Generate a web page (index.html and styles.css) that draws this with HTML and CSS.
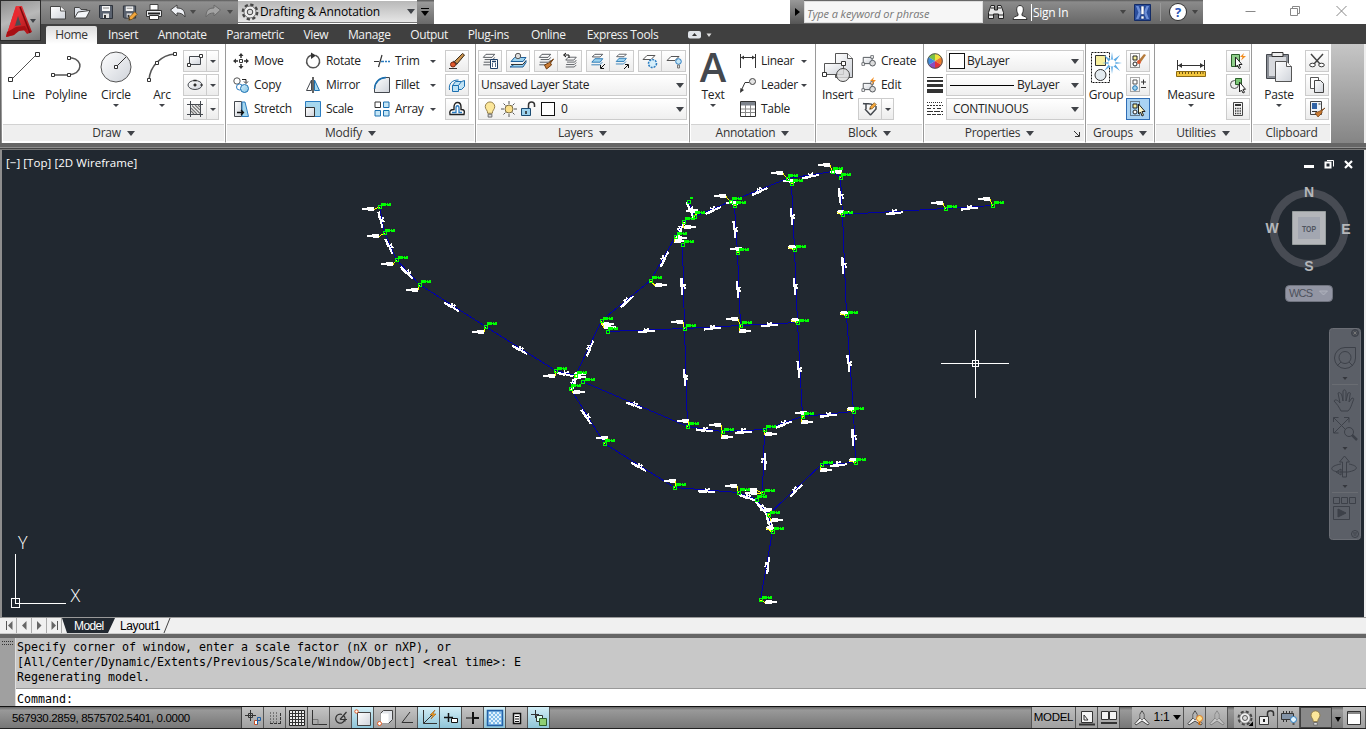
FILE: index.html
```html
<!DOCTYPE html>
<html lang="en">
<head>
<meta charset="utf-8">
<title>Drafting &amp; Annotation</title>
<link rel="stylesheet" href="styles.css">
</head>
<body>
<svg class="defs" width="0" height="0">
  <defs>
    <linearGradient id="paper" x1="0" y1="0" x2="1" y2="1"><stop offset="0" stop-color="#fff"/><stop offset="1" stop-color="#cfd3da"/></linearGradient>
    <linearGradient id="red" x1="0" y1="0" x2="1" y2="1"><stop offset="0" stop-color="#f7454a"/><stop offset="1" stop-color="#a80d12"/></linearGradient>
    <linearGradient id="blue" x1="0" y1="0" x2="1" y2="1"><stop offset="0" stop-color="#d6effb"/><stop offset="1" stop-color="#7fc3e6"/></linearGradient>
    <symbol id="layers" viewBox="0 0 16 16"><path d="M4.500 1.500h10l-3 3.500H1.500zM3 7.500h9.500l2-2.500M2 10.500h10l2.500-2.500M1.500 13.500h10.500l2.500-2.500" fill="none" stroke="#44484e"/></symbol>
    <symbol id="layersblue" viewBox="0 0 16 16"><path d="M5 6.500h9l-3 4H1.500z" fill="#9cd2ee" stroke="#1c70b0"/><path d="M5 1.500h9l-3 3H2z" fill="#fff" stroke="#44484e"/><path d="M1 13.500h9.500l3-3" fill="none" stroke="#1c70b0"/></symbol>
    <symbol id="bulb" viewBox="0 0 12 18"><path d="M6 1a5 5 0 0 0-5 5c0 3 2.500 3.500 2.500 7h5c0-3.500 2.500-4 2.500-7a5 5 0 0 0-5-5z" fill="#fce79a" stroke="#8f7a45"/><path d="M4 14h4v3H4z" fill="#ddd" stroke="#666"/></symbol>
    <symbol id="compass" viewBox="0 0 16 16"><path d="M8 .8L6 4v4L1 13.500l1 1.500 6-4 6 4 1-1.500L10 8V4z" fill="#f4f4f4" stroke="#444"/><path d="M8 2v7M6 8l2 2 2-2" fill="none" stroke="#777"/></symbol>
    <symbol id="gear" viewBox="0 0 18 18"><circle cx="9" cy="9" r="6.800" fill="none" stroke="#444" stroke-width="3.200" stroke-dasharray="3.100 2.240"/><circle cx="9" cy="9" r="6" fill="#eee" stroke="#777"/><circle cx="9" cy="9" r="2.800" fill="#ddd" stroke="#444"/></symbol>
    <symbol id="floppy" viewBox="0 0 16 16"><path d="M1.500 1.500h13v13h-12l-1-1z" fill="#59616e" stroke="#2e333b"/><path d="M4 2h8v5H4z" fill="#f5f5f5"/><path d="M5 9.500h6V14H5z" fill="#e4e4e4"/><path d="M6 11h2v3H6z" fill="#333"/><path d="M5 4h6" stroke="#888"/></symbol>
    <symbol id="shapes" viewBox="0 0 18 14"><path d="M2.500 3.500h10v7h-10z" fill="url(#paper)" stroke="#44484e"/><path d="M1 9.500h3v3H1zM11 1.500h3v3h-3z" fill="#fff" stroke="#44484e" stroke-width=".8"/><circle cx="13" cy="10" r="3.200" fill="#ddd" stroke="#44484e"/></symbol>
    <symbol id="pencil" viewBox="0 0 12 12"><path d="M1 11l1-4 6-6 3 3-6 6z" fill="#f3a63c" stroke="#70501c"/><path d="M1 11l1-2 1 1z" fill="#222"/></symbol>
  </defs>
</svg>

<header class="titlebar">
  <div class="quick">
    <svg class="qi" viewBox="0 0 18 18"><path d="M1.500 3.500h10l5 4.500v8h-15z" fill="url(#paper)" stroke="#444"/><path d="M11.500 3.500V8h5" fill="#fff" stroke="#555"/></svg>
    <svg class="qi" viewBox="0 0 18 18"><path d="M1.500 15V4.500h5l1.500 2h6V9" fill="#dfe3ea" stroke="#444"/><path d="M1.500 15L5 9l12-1.500L13 15z" fill="#f5f7fa" stroke="#444"/></svg>
    <svg class="qi" viewBox="0 0 18 18"><use href="#floppy" x="1" y="1" width="16" height="16"/></svg>
    <svg class="qi" viewBox="0 0 18 18"><use href="#floppy" x="1" y="1" width="15" height="16"/><use href="#pencil" x="7" y="8" width="10" height="10"/></svg>
    <svg class="qi" viewBox="0 0 18 18"><path d="M5 1.500h8V7H5z" fill="#fff" stroke="#444"/><path d="M1.500 7.500h15v6h-15z" fill="#eef0f3" stroke="#333"/><path d="M3 10.500h12" stroke="#222" stroke-width="2"/><path d="M4.500 12.500h9v4h-9z" fill="#fff" stroke="#333"/></svg>
    <svg class="qi" viewBox="0 0 18 18"><path d="M1.500 7L8 2v3c6 0 8 3 8 9-2-3-4-4-8-4v3z" fill="#eef0f5" stroke="#444"/></svg>
    <i class="tri qt"></i>
    <svg class="qi redo" viewBox="0 0 18 18"><path d="M16.500 7L10 2v3C4 5 2 8 2 14c2-3 4-4 8-4v3z" fill="#a3a3a3" stroke="#6a6a6a"/></svg>
    <i class="tri qt"></i>
  </div>
  <div class="workspace"><svg width="18" height="18"><use href="#gear"/></svg><span>Drafting &amp; Annotation</span><i class="tri"></i></div>
  <div class="customize"><i class="bar"></i><i class="tri black"></i></div>
  <div class="infocenter">
    <div class="play"><svg width="5" height="8"><path d="M0 0l5 4-5 4z"/></svg></div>
    <div class="search">Type a keyword or phrase</div>
    <svg class="binoc" width="18" height="16" viewBox="0 0 18 16"><path d="M4 1.500h3.500V6h3V1.500H14l2.500 7v6h-5V10h-5v4.500h-5v-6z" fill="#e8e8e8" stroke="#222"/><path d="M2 11h4M12 11h4M4 4h3M11 4h3" stroke="#222"/></svg>
    <svg class="user" width="16" height="17" viewBox="0 0 16 17"><path d="M1 15.500c0-3 3-3 5-4V10C4 7 4 1.500 8 1.500S12 7 10 10v1.500c2 1 5 1 5 4z" fill="#fff" stroke="#333"/></svg>
    <span class="signin">Sign In</span><i class="tri st"></i>
    <svg class="exch" width="17" height="17" viewBox="0 0 17 17"><path d="M.5.500h16v16H.5z" fill="#2c4f9e" stroke="#132b66"/><path d="M2 2h2.500l3 6.500-3 6.500H2l2.500-6.500zM15 2h-2.500l-3 6.500 3 6.500H15l-2.500-6.500z" fill="#6d8fd6"/><path d="M7 2h3v8.500H7zM7 12h3v3H7z" fill="#fff" stroke="#1b3575" stroke-width=".6"/></svg>
    <i class="vsep"></i>
    <div class="help">?</div><i class="tri st"></i>
  </div>
  <svg class="wctl" width="104" height="12" viewBox="0 0 104 12"><path d="M.5 6.500h10M45.500 3.500h7v7h-7zM47.500 3.500v-2h7v7h-2M91.500 1l10 10M101.500 1l-10 10" fill="none" stroke="#888"/></svg>
</header>

<nav class="tabs">
  <span class="tab on">Home</span><span class="tab">Insert</span><span class="tab">Annotate</span><span class="tab">Parametric</span><span class="tab">View</span><span class="tab">Manage</span><span class="tab">Output</span><span class="tab wide">Plug-ins</span><span class="tab">Online</span><span class="tab">Express Tools</span>
  <svg class="mini" width="24" height="8" viewBox="0 0 24 8"><rect width="13" height="7.500" rx="2" fill="#dfe3e8"/><path d="M4 5l2.500-3L9 5z" fill="#333"/><path d="M18.500 2.500h5L21 6z" fill="#ddd"/></svg>
</nav>
<div class="appbtn"><svg width="30" height="34" viewBox="0 0 30 34"><path d="M12 2h6l10 26-5 2-4-5-7 1-2 5-8 2L10 8z" fill="url(#red)"/><path d="M12 2l3 8-9 22-4 1L10 8z" fill="#e8292f"/><path d="M14 12l3 9-6 1z" fill="#4d4d50"/><path d="M16 3l10 26" stroke="#7d0a0d" stroke-width="1.500"/><path d="M3 28l9-5 9-1 2 4-8 1-5 4-8 2z" fill="#a81014"/></svg><i class="tri"></i></div>

<main class="ribbon">
  <section class="panel draw">
    <div class="body">
      <div class="big w44"><svg viewBox="0 0 34 34"><path d="M4 30L30 4" stroke="#555"/><path d="M1.500 27.500h4v4h-4zM28.500 2.500h4v4h-4z" fill="#fff" stroke="#333"/></svg><b>Line</b></div>
      <div class="big w42"><svg viewBox="0 0 34 34"><path d="M4 25h16M20 8h3c11 2 11 15-3 17" fill="none" stroke="#555" stroke-width="1.500"/><path d="M2.500 23.500h3v3h-3zM18.500 23.500h3v3h-3zM18.500 6.500h3v3h-3z" fill="#fff" stroke="#333"/></svg><b>Polyline</b></div>
      <div class="big w58"><svg viewBox="0 0 34 34"><circle cx="17" cy="17" r="15" fill="url(#paper)" stroke="#555"/><path d="M17 17L27 7" stroke="#333"/><path d="M15.500 15.500h3v3h-3z" fill="#fff" stroke="#333"/></svg><b>Circle</b><i class="tri s"></i></div>
      <div class="big w34"><svg viewBox="0 0 34 34"><path d="M4 30C5 16 16 5 30 4" fill="none" stroke="#555" stroke-width="1.500"/><path d="M2.500 28.500h3v3h-3zM28.500 2.500h3v3h-3zM10.500 11.500h3v3h-3z" fill="#fff" stroke="#333"/></svg><b>Arc</b><i class="tri s"></i></div>
      <div class="stack splits">
        <div class="split"><span class="sb"><svg viewBox="0 0 16 16"><path d="M2.500 3.500h11v8h-11z" fill="url(#paper)" stroke="#44484e"/><path d="M.5 10.500h3v3h-3zM12.500 1.500h3v3h-3z" fill="#fff" stroke="#333"/></svg></span><span class="sa"><i class="tri s"></i></span></div>
        <div class="split"><span class="sb"><svg viewBox="0 0 16 16"><ellipse cx="8" cy="8" rx="7" ry="4.500" fill="url(#paper)" stroke="#44484e"/><path d="M6.500 8h3M8 6.500v3M6.500 3.500h3M13.500 8h2" stroke="#222" stroke-width="1.500"/></svg></span><span class="sa"><i class="tri s"></i></span></div>
        <div class="split"><span class="sb"><svg viewBox="0 0 16 16"><path d="M0 3.500h16M0 13.500h16M3.500 0v16M13.500 0v16" stroke="#44484e"/><path d="M4 10l3 3M4 7l6 6M5 4.500l8 8M8 4l5 5M11 4l2 2" stroke="#777" stroke-width="1.200"/></svg></span><span class="sa"><i class="tri s"></i></span></div>
      </div>
    </div>
    <footer>Draw<i class="tri"></i></footer>
  </section>

  <section class="panel modify">
    <div class="body">
      <div class="stack c72">
        <div class="cmd"><svg viewBox="0 0 16 16"><path d="M8 1v4M8 11v4M1 8h4M11 8h4" stroke="#333" stroke-width="1.500"/><path d="M8 0l2.500 3h-5zM8 16l2.500-3h-5zM0 8l3-2.500v5zM16 8l-3-2.500v5z" fill="#333"/><path d="M6.500 6.500h3v3h-3z" fill="#fff" stroke="#333"/></svg>Move</div>
        <div class="cmd"><svg viewBox="0 0 16 16"><circle cx="4" cy="4" r="3.200" fill="#fff" stroke="#555"/><circle cx="6.500" cy="10" r="3" fill="#fff" stroke="#2b7cc0"/><circle cx="11.500" cy="11.500" r="4" fill="url(#blue)" stroke="#1c70b0"/><path d="M9 2.500h4v3M11 4.500l2 2 2-2" fill="none" stroke="#222"/></svg>Copy</div>
        <div class="cmd"><svg viewBox="0 0 16 16"><path d="M1.500.500h7v15h-7z" fill="url(#paper)" stroke="#44484e"/><path d="M9 1h3l3.500 14.500H9z" fill="#a6d7ee" stroke="#2b7cc0"/><path d="M4 11.500h6M8 9l2.500 2.500L8 14" fill="none" stroke="#111" stroke-width="1.300"/></svg>Stretch</div>
      </div>
      <div class="stack c69">
        <div class="cmd"><svg viewBox="0 0 16 16"><path d="M6 2.200A6.500 6.500 0 1 0 10.500 2.300" fill="none" stroke="#555" stroke-width="1.500"/><path d="M6-.5L11 2.500 6 6z" fill="#333"/></svg>Rotate</div>
        <div class="cmd"><svg viewBox="0 0 16 16"><path d="M1.500 13.500L6.500 3v10.500z" fill="#fff" stroke="#44484e"/><path d="M14.500 13.500L9.500 3v10.500z" fill="#a6d7ee" stroke="#1c70b0"/><path d="M8 0v16" stroke="#111" stroke-width="1.300"/></svg>Mirror</div>
        <div class="cmd"><svg viewBox="0 0 16 16"><path d="M.5.500h15v15H.5z" fill="#a6d7ee" stroke="#2b7cc0"/><path d="M.5 6.500h9v9h-9z" fill="url(#paper)" stroke="#333"/></svg>Scale</div>
      </div>
      <div class="stack c72 arrows">
        <div class="cmd"><svg viewBox="0 0 16 16"><path d="M0 8.500h5M8 2L4.500 14" stroke="#333" stroke-width="1.200"/><path d="M7 8.500h3M11 8.500h2M14 8.500h2" stroke="#2b7cc0" stroke-width="1.300"/></svg>Trim<i class="tri s"></i></div>
        <div class="cmd"><svg viewBox="0 0 16 16"><path d="M.5 15.500V12C1 5 5 1 12 .5h3.500v15z" fill="url(#paper)" stroke="#44484e"/><path d="M.5 12C1 5 5 1 12 .5" fill="none" stroke="#1c70b0" stroke-width="1.500"/></svg>Fillet<i class="tri s"></i></div>
        <div class="cmd"><svg viewBox="0 0 16 16"><path d="M1 1h5.500v5.500H1z" fill="#fff" stroke="#333"/><path d="M9.500 1H15v5.500H9.500zM1 9.500h5.500V15H1zM9.500 9.500H15V15H9.500z" fill="#c5e6f6" stroke="#1c70b0"/></svg>Array<i class="tri s"></i></div>
      </div>
      <div class="stack btns">
        <span class="sb"><svg viewBox="0 0 16 16"><path d="M5 9l8.500-8.500 2 1.500L8 11z" fill="#c9924e" stroke="#3c2c18"/><path d="M5 7.500l3.500 3.500-1.500 1.500L3.500 9z" fill="#444"/><circle cx="4" cy="11.500" r="2.500" fill="#e0592e" stroke="#7b2a10"/><path d="M0 15.500h8" stroke="#333"/></svg></span>
        <span class="sb"><svg viewBox="0 0 16 16"><path d="M3.500 8.500h6v6h-6zM3.500 8.500l3-4h6l-3 4M12.500 4.500l3-1v6l-3 3h-3" fill="#bfe2f5" stroke="#1c70b0"/><path d="M.5 13c-1-6 2-10 9-10" fill="none" stroke="#1c70b0"/></svg></span>
        <span class="sb"><svg viewBox="0 0 16 16"><path d="M1 13.500c-1-4 1-5 4-5V6c0-6 7-6 7 0v2.500c3 0 4 1 3 5z" fill="#fff" stroke="#222" stroke-width="1.400"/><path d="M3 11.500h4V7c0-3 3-3 3 0v4.500h3" fill="none" stroke="#2b7cc0" stroke-width="1.300"/></svg></span>
      </div>
    </div>
    <footer>Modify<i class="tri"></i></footer>
  </section>

  <section class="panel layer">
    <div class="body col">
      <div class="lrow">
        <span class="sb"><svg viewBox="0 0 16 16"><use href="#layers" width="14" height="14"/><path d="M8.500 6.500h7v9h-7z" fill="#fff" stroke="#1f3e66"/><path d="M10 8.500h4M10 11h1M13 11h1M10 13h1M13 13h1" stroke="#1f3e66" stroke-width="1.500"/></svg></span>
        <span class="sb"><svg viewBox="0 0 16 16"><path d="M4 11.500h9l3-4v2l-3 4.500H0zM4.500 4.500H16l-3 4H1z" fill="#9cd2ee" stroke="#1c5f9b"/><path d="M1 11.500h11.500l3-3" fill="none" stroke="#333"/><circle cx="8" cy="3" r="2.700" fill="#ddd" stroke="#555"/></svg></span>
        <span class="pair"><span class="sb"><svg viewBox="0 0 16 16"><use href="#layers" width="14" height="14"/><path d="M15.500 6l-3 4 1 2-5 4-2-4 4-2z" fill="#c97a33" stroke="#6e3c10"/></svg></span><span class="sb"><svg viewBox="0 0 16 16"><use href="#layers" x="2" y="3" width="14" height="13"/><path d="M7 5V2H2M4 0L1.500 2 4 4" fill="none" stroke="#111"/></svg></span></span>
        <span class="pair"><span class="sb"><svg viewBox="0 0 16 16"><use href="#layersblue" width="15" height="14"/><path d="M15 11l-4 4M10.500 12v3.500H14" fill="none" stroke="#111"/></svg></span><span class="sb"><svg viewBox="0 0 16 16"><use href="#layersblue" width="15" height="13"/><path d="M10 16l4-4M11 11.500h3.500V15" fill="none" stroke="#111"/></svg></span></span>
        <span class="pair"><span class="sb"><svg viewBox="0 0 16 16"><path d="M5 2.500h8l-4 4H1z" fill="#fff" stroke="#555"/><circle cx="10.500" cy="10.500" r="4" fill="#d6effb" stroke="#2b7cc0" stroke-width="1.500" stroke-dasharray="2 1"/></svg></span><span class="sb"><svg viewBox="0 0 16 16"><path d="M5 3.500h8l-4 4H1z" fill="#fff" stroke="#555"/><circle cx="12.500" cy="8.500" r="2.800" fill="#c5e6f6" stroke="#2b7cc0"/><path d="M11.500 12h2v3h-2z" fill="#ddd" stroke="#777"/></svg></span></span>
      </div>
      <div class="combo"><span>Unsaved Layer State</span><i class="tri"></i></div>
      <div class="combo icons"><svg width="12" height="17"><use href="#bulb"/></svg><svg width="16" height="16" viewBox="0 0 16 16"><circle cx="8" cy="8" r="4" fill="#fbe08a" stroke="#7a6c45"/><path d="M8 0v3M8 13v3M0 8h3M13 8h3M2.500 2.500l2 2M11.500 11.500l2 2M13.500 2.500l-2 2M4.500 11.500l-2 2" stroke="#555"/></svg><svg width="16" height="16" viewBox="0 0 16 16"><path d="M1.500 7.500h9v7h-9z" fill="#9cd2ee" stroke="#1b4b72"/><path d="M8.500 7V4c0-4 6-4 6 0v2" fill="none" stroke="#333" stroke-width="1.500"/><path d="M6 10v3" stroke="#222" stroke-width="1.500"/></svg><i class="swatch"></i><span>0</span><i class="tri"></i></div>
    </div>
    <footer>Layers<i class="tri"></i></footer>
  </section>

  <section class="panel anno">
    <div class="body">
      <div class="big w44"><strong class="glyph">A</strong><b>Text</b><i class="tri s"></i></div>
      <div class="stack c72 arrows">
        <div class="cmd"><svg viewBox="0 0 16 16"><path d="M.5 1v14M15.500 1v14M1 4.500h14" stroke="#333"/><path d="M1 4.500l3-2v4zM15 4.500l-3-2v4z" fill="#333"/></svg>Linear<i class="tri s"></i></div>
        <div class="cmd"><svg viewBox="0 0 16 16"><path d="M1 14L5 5.500h4" fill="none" stroke="#333"/><path d="M0 16l.5-5L4 13z" fill="#333"/><circle cx="12.500" cy="4.500" r="3" fill="#e4e4e4" stroke="#444"/></svg>Leader<i class="tri s"></i></div>
        <div class="cmd"><svg viewBox="0 0 16 16"><path d="M.5.500h15v15H.5z" fill="#fff" stroke="#333"/><path d="M1 1h14v3.500H1z" fill="#7d838c"/><path d="M5.500 4v11M10.500 4v11M1 8h14M1 11.500h14" stroke="#888"/></svg>Table</div>
      </div>
    </div>
    <footer>Annotation<i class="tri"></i></footer>
  </section>

  <section class="panel block">
    <div class="body">
      <div class="big w42"><svg viewBox="0 0 34 34"><path d="M14.500 3.500h12l5 5v19h-17z" fill="url(#paper)" stroke="#555"/><path d="M26.500 3.500v5h5" fill="#fff" stroke="#555"/><path d="M3.500 13.500h19v11h-19z" fill="url(#paper)" stroke="#555"/><path d="M1.500 22.500h4v4h-4zM20.500 11.500h4v4h-4z" fill="#fff" stroke="#333"/><circle cx="22" cy="25" r="6.500" fill="#ddd" fill-opacity=".8" stroke="#444"/></svg><b>Insert</b></div>
      <div class="stack">
        <div class="cmd"><svg viewBox="0 0 16 16"><use href="#shapes" width="16" height="15"/></svg>Create</div>
        <div class="cmd"><svg viewBox="0 0 16 16"><use href="#shapes" y="3" width="16" height="13"/><path d="M13 0l-4 4h3l-2 4 5-5h-3z" fill="#f28c1e"/></svg>Edit</div>
        <div class="split"><span class="sb"><svg viewBox="0 0 16 16"><path d="M1 2.500c3 1 8-1 10 1.500M4 3v5M8.500 14L3 8M8.500 14L14 8V5" fill="none" stroke="#44484e" stroke-width="1.500"/><use href="#pencil" x="7" y="1" width="8" height="8"/></svg></span><span class="sa"><i class="tri s"></i></span></div>
      </div>
    </div>
    <footer>Block<i class="tri"></i></footer>
  </section>

  <section class="panel props">
    <div class="body">
      <div class="stack pic">
        <svg viewBox="0 0 16 16"><circle cx="8" cy="8" r="7.500" fill="#eee"/><path d="M8 8V.5A7.500 7.500 0 0 1 14.500 4z" fill="#f3e23c"/><path d="M8 8V.5A7.500 7.500 0 0 0 1.500 4z" fill="#7cc242"/><path d="M8 8l6.500-4a7.500 7.500 0 0 1 0 8z" fill="#ee7d2b"/><path d="M8 8l6.500 4A7.500 7.500 0 0 1 8 15.500z" fill="#e2323a"/><path d="M8 8v7.500A7.500 7.500 0 0 1 1.500 12z" fill="#8a4bc0"/><path d="M8 8l-6.500 4a7.500 7.500 0 0 1 0-8z" fill="#3c8de0"/><circle cx="8" cy="8" r="7.300" fill="none" stroke="#555"/></svg>
        <svg viewBox="0 0 16 16"><path d="M0 .5h16" stroke="#333"/><path d="M0 4h16" stroke="#333" stroke-width="2"/><path d="M0 8.500h16" stroke="#333" stroke-width="3"/><path d="M0 14h16" stroke="#333" stroke-width="4"/></svg>
        <svg viewBox="0 0 16 16"><path d="M0 1.500h16" stroke="#333" stroke-dasharray="1 1"/><path d="M0 4.500h16" stroke="#333" stroke-dasharray="2 1"/><path d="M0 7.500h16" stroke="#333" stroke-dasharray="4 2 2 2"/><path d="M0 10.500h16" stroke="#333" stroke-dasharray="6 1"/><path d="M0 13.500h16" stroke="#333" stroke-dasharray="4 1"/></svg>
      </div>
      <div class="stack combos">
        <div class="combo"><i class="swatch"></i><span>ByLayer</span><i class="tri"></i></div>
        <div class="combo"><i class="rule"></i><span>ByLayer</span><i class="tri"></i></div>
        <div class="combo"><span class="cont">CONTINUOUS</span><i class="tri"></i></div>
      </div>
    </div>
    <footer class="off">Properties<i class="tri"></i><svg class="launch" width="6" height="6"><path d="M0 0l5 5M5.500 1v4.500H1" fill="none" stroke="#333"/></svg></footer>
  </section>

  <section class="panel groups">
    <div class="body">
      <div class="big w40"><svg viewBox="0 0 34 34"><path d="M2.500 2.500h18v30h-18z" fill="none" stroke="#111" stroke-dasharray="2 1"/><path d="M6.500 5.500h10v10h-10z" fill="#f7ef9e" stroke="#333"/><circle cx="11.500" cy="25" r="5.500" fill="#e4ebf0" stroke="#333"/><path d="M23 2l1 8 7-5-5 7 7 1-7 1 5 7-7-5-1 8-1-8-7 5 5-7-7-1 7-1-5-7 7 5z" fill="#5aa9e4"/><circle cx="23" cy="13" r="3.500" fill="#fff"/></svg><b>Group</b></div>
      <div class="stack btns">
        <span class="sb"><svg viewBox="0 0 16 16"><path d="M.5.500h9v14h-9z" fill="none" stroke="#333" stroke-dasharray="1 1"/><path d="M3 3h4v4H3z" fill="#f7ef9e" stroke="#222"/><circle cx="5" cy="11" r="2" fill="#fff" stroke="#222"/><path d="M9 7l5-6 2 1-5 7z" fill="#b57a3a"/><circle cx="9" cy="9" r="2" fill="#d9562e"/></svg></span>
        <span class="sb"><svg viewBox="0 0 16 16"><path d="M.5.500h9v14h-9z" fill="none" stroke="#555" stroke-dasharray="1 1"/><path d="M3 3h4v4H3z" fill="#fff" stroke="#555"/><circle cx="5" cy="11" r="2.300" fill="#9cd2ee" stroke="#1c70b0"/><path d="M11 5h5M13.500 2.500v5M11 10.500h5" stroke="#333"/></svg></span>
        <span class="sb on"><svg viewBox="0 0 16 16"><path d="M.5.500h9v14h-9z" fill="none" stroke="#222" stroke-dasharray="1 1"/><path d="M3 3h4v4H3z" fill="#f7ef9e" stroke="#222"/><circle cx="5" cy="11" r="2" fill="#fff" stroke="#222"/><path d="M8.500 3v10l2-2 1.500 4 1.500-.7L12 10.500h3z" fill="#fff8c8" stroke="#222"/></svg></span>
      </div>
    </div>
    <footer>Groups<i class="tri"></i></footer>
  </section>

  <section class="panel utils">
    <div class="body">
      <div class="big w70"><svg viewBox="0 0 34 34"><path d="M3 15.500h28M3.500 10v10M30.500 10v10" stroke="#333"/><path d="M4 15.500l4-2.500v5zM30 15.500l-4-2.500v5z" fill="#333"/><path d="M2.500 21.500h29v5h-29z" fill="#f2c53d" stroke="#8b6a14"/><path d="M5.500 22v2M8.500 22v2M11.500 22v2M14.500 22v2M17.500 22v2M20.500 22v2M23.500 22v2M26.500 22v2M29 22v2" stroke="#6e5210"/></svg><b>Measure</b><i class="tri s"></i></div>
      <div class="stack btns">
        <span class="sb"><svg viewBox="0 0 16 16"><path d="M1.500 1.500h8v12h-8z" fill="#8fd08a" stroke="#2b5f2a"/><path d="M5.500 4v10l2-2 1.500 3.500 1.500-.7L9 11.500h3z" fill="#fff" stroke="#222"/><path d="M14 0l-4 4h2.500L11 7.500 16 3h-3z" fill="#f28c1e"/></svg></span>
        <span class="sb"><svg viewBox="0 0 16 16"><circle cx="4.500" cy="7.500" r="4" fill="#eee" stroke="#555"/><path d="M5.500 1.500h6v6h-6z" fill="#7cc676" stroke="#2b5f2a"/><path d="M9.500 5v10l2-2 1.500 3 1.500-.7-1.500-3h2.500z" fill="#fff" stroke="#222"/></svg></span>
        <span class="sb"><svg viewBox="0 0 16 16"><path d="M3.500 1.500h9v13h-9z" fill="#f4f4f4" stroke="#444"/><path d="M5 4h6" stroke="#333" stroke-width="2"/><path d="M5 7.500h6M5 10h6M5 12.500h6" stroke="#333" stroke-width="1.500" stroke-dasharray="1.300 1"/></svg></span>
      </div>
    </div>
    <footer>Utilities<i class="tri"></i></footer>
  </section>

  <section class="panel clip">
    <div class="body">
      <div class="big w52"><svg viewBox="0 0 34 34"><path d="M4.500 4.500h22v24h-22z" fill="#8b8f96" stroke="#44484e"/><path d="M7 7h17v19H7z" fill="#d8dade"/><path d="M10 2.500h11v4H10z" fill="#eee" stroke="#333"/><path d="M13.500 11.500h11l5 5v15h-16z" fill="url(#paper)" stroke="#555"/><path d="M24.500 11.500v5h5" fill="#fff" stroke="#555"/></svg><b>Paste</b><i class="tri s"></i></div>
      <div class="stack btns">
        <span class="sb"><svg viewBox="0 0 16 16"><path d="M2 1l9 10M14 1L5 11" stroke="#444" stroke-width="1.500"/><ellipse cx="3.500" cy="12" rx="2.800" ry="1.800" fill="#fff" stroke="#333"/><ellipse cx="12.500" cy="12" rx="2.800" ry="1.800" fill="#fff" stroke="#333"/></svg></span>
        <span class="sb"><svg viewBox="0 0 16 16"><path d="M1.500.500h8v11h-8z" fill="#fff" stroke="#555"/><path d="M5.500 3.500h6l3 3v9h-9z" fill="url(#paper)" stroke="#444"/></svg></span>
        <span class="sb"><svg viewBox="0 0 16 16"><path d="M1.500.500h11v13h-11z" fill="#eef2f7" stroke="#444"/><path d="M3 2h5v6H3z" fill="#2f62a5"/><path d="M3 10.500h5M9.500 3h2" stroke="#333"/><path d="M16 7l-3 3v2l-4 4-3-4 5-2z" fill="#c97a33" stroke="#6e3c10" stroke-width=".7"/></svg></span>
      </div>
    </div>
    <footer>Clipboard</footer>
  </section>
</main>
<div class="gutter"></div>

<div class="canvas">
<svg id="drawing" width="1362" height="467" viewBox="2 150 1362 467">
  <text x="6" y="167" class="vp">[−] [Top] [2D Wireframe]</text>
  <g id="network" shape-rendering="crispEdges"></g>
  <g shape-rendering="crispEdges" fill="none" stroke="#fff">
    <path d="M941 363.500h68M975.500 330v68"/><path d="M972.500 360.500h6v6h-6z"/>
    <path d="M15.500 554v49h50M11.500 598.500h8v9h-8z"/>
  </g>
  <text class="ucs" x="18" y="549">Y</text><text class="ucs" x="70.500" y="602">X</text>
  <path d="M1304 166.500h10" stroke="#fff" stroke-width="3"/>
  <path d="M1325.500 162.500h5v5h-5z" fill="none" stroke="#fff" stroke-width="2"/><path d="M1327 160.500h6.500v6" fill="none" stroke="#fff"/>
  <path d="M1345 161l7 7M1352 161l-7 7" stroke="#fff" stroke-width="2.200"/>
  <circle cx="1309" cy="228.500" r="35.500" fill="none" stroke="#474b53" stroke-width="8"/>
  <g class="dir"><text x="1309" y="196.500">N</text><text x="1346" y="233.500">E</text><text x="1309" y="270.500">S</text><text x="1272" y="233">W</text></g>
  <path d="M1292.500 211.500h33v33h-33z" fill="#b4b6ba" stroke="#969c9c"/><path d="M1298 217h22v22h-22z" fill="#a3a7b1"/>
  <text class="top" x="1309" y="231.500" textLength="14" lengthAdjust="spacingAndGlyphs">TOP</text>
  <rect x="1285.500" y="285.500" width="47" height="16" rx="4" fill="#9295a3" stroke="#70747f"/>
  <text class="wcs" x="1289" y="297" textLength="24">WCS</text><path d="M1319.500 291h8l-4 4z" fill="#9a9daa" stroke="#b4b6c0" stroke-width=".8"/>
  <g class="navbar" fill="none" stroke="#3d4149">
    <rect x="1329.500" y="328.500" width="31" height="211" rx="3" fill="#5b5f67" stroke="#6b6e75"/>
    <circle cx="1355" cy="333" r="3.500" fill="#484c54"/><path d="M1353.500 331.500l3 3M1356.500 331.500l-3 3" stroke="#777"/>
    <path d="M1345 347.500h10.500V358a10.500 10.500 0 1 1-10.500-10.500z"/><circle cx="1345" cy="357.500" r="6"/><path d="M1337 366l4-4M1353 366l-4-4"/>
    <path d="M1332 384.500h26M1332 492.500h26" stroke="#696c72"/>
    <path d="M1341 411c-2-4-4-7-7-10 1-2 4-1 6 2l-2-10c2-1 3 0 4 3l1 5v-10c1-2 3-1 3 1v9l2-8c2-1 3 0 2 2l-1 7 3-4c2 0 2 1 1 3-2 5-2 7-5 10z"/>
    <path d="M1334 418l14 14M1349 418l-15 15M1333.500 422v-4.500h5M1344 417.500h5v5M1333.500 428v5h5"/><circle cx="1349" cy="432" r="4.500" fill="#5b5f67"/><path d="M1352 435l5 5" stroke-width="2.500"/>
    <path d="M1342.500 477v-15h-3l5-6 5 6h-3v15z"/><path d="M1341 464c-12 2-12 7-2 8M1349 464c10 2 10 6-1 8h-10M1341 469l-5 3 5 3z"/>
    <path d="M1333.500 497.500h6v6h-6zM1341.500 497.500h6v6h-6zM1349.500 497.500h6v6h-6zM1333.500 506.500h16v13h-16z"/><path d="M1338 509l8 4-8 4z" fill="#3d4149"/>
    <path d="M1342.500 377h5l-2.500 3zM1342.500 447h5l-2.500 3zM1342.500 485h5l-2.500 3z" fill="#35383e" stroke="none"/>
    <circle cx="1355" cy="534" r="3.500"/><path d="M1353 533h4M1353.500 535h3" />
  </g>
</svg>
</div>

<div class="layouts">
  <div class="lnav"><svg viewBox="0 0 14 15"><path d="M4.500 3v9" stroke="#555"/><path d="M10.500 3v9L6 7.500z" fill="#666"/></svg><svg viewBox="0 0 14 15"><path d="M9.500 3v9L5 7.500z" fill="#666"/></svg><svg viewBox="0 0 14 15"><path d="M5 3v9l4.500-4.500z" fill="#666"/></svg><svg viewBox="0 0 14 15"><path d="M10.500 3v9" stroke="#555"/><path d="M4.500 3v9L9 7.500z" fill="#666"/></svg></div>
  <span class="ltab on">Model</span><span class="ltab">Layout1</span><svg width="8" height="15"><path d="M1 15L7 0" stroke="#444"/></svg>
</div>

<div class="command">
  <div class="grip"><i></i></div>
  <div class="cmdtext">
    <div class="history">Specify corner of window, enter a scale factor (nX or nXP), or<br>[All/Center/Dynamic/Extents/Previous/Scale/Window/Object] &lt;real time&gt;: E<br>Regenerating model.</div>
    <div class="prompt">Command:</div>
  </div>
</div>

<div class="status">
  <div class="coords">567930.2859, 8575702.5401, 0.0000</div>
  <div class="toggles">
    <span><svg viewBox="0 0 16 16"><path d="M0 5.500h11M5.500 0v11" stroke="#333"/><path d="M3.500 3.500h4v4h-4z" fill="none" stroke="#333"/><path d="M9.500 10.500h3v4h-3z" fill="#fff" stroke="#c5502a"/><path d="M12.500 14.500v-7h3v3h-3" fill="none" stroke="#1c5fa8"/></svg></span>
    <span><svg viewBox="0 0 16 16"><path d="M3 3h9M3 6h9M3 9h9M3 12h9" stroke="#333" stroke-dasharray="1 2"/><path d="M3 13.500h10M13.500 3v11" stroke="#333" stroke-dasharray="3 1"/></svg></span>
    <span><svg viewBox="0 0 16 16"><path d="M.5.500h15v15H.5z" fill="#eee" stroke="#222"/><path d="M3.500 0v16M6.500 0v16M9.500 0v16M12.500 0v16M0 3.500h16M0 6.500h16M0 9.500h16M0 12.500h16" stroke="#333"/></svg></span>
    <span><svg viewBox="0 0 16 16"><path d="M1.500 0v14.500H16" fill="none" stroke="#333"/><path d="M2 9.500h5v5" fill="none" stroke="#777"/></svg></span>
    <span><svg viewBox="0 0 16 16"><path d="M11.500 10A4.500 4.500 0 1 1 9 4.500M7 9.500L13.500 2M7 9.500h7M10.500 5.500c1.500 1 2 2.500 1.500 6" fill="none" stroke="#333" stroke-width="1.200"/></svg></span>
    <span class="on"><svg viewBox="0 0 16 16"><path d="M2.500 2.500h13v13h-13z" fill="url(#paper)" stroke="#444"/><circle cx="1.500" cy="1.500" r="1.700" fill="#fff" stroke="#e05a20"/></svg></span>
    <span><svg viewBox="0 0 16 16"><path d="M3.500 3.500l3-3h9v9l-4 4h-8z" fill="#e2e5ea" stroke="#444"/><path d="M3.500 3.500h8v10h-8z" fill="#fff"/><circle cx="2.500" cy="13.500" r="2" fill="#fff" stroke="#e05a20"/></svg></span>
    <span><svg viewBox="0 0 16 16"><path d="M11 2L3 12.500h11" fill="none" stroke="#333"/></svg></span>
    <span class="on"><svg viewBox="0 0 16 16"><path d="M2.500 0v13.500H16M2.500 13.500l9-9" fill="none" stroke="#333"/><path d="M14 0L9 5h3l-2 4 5-5h-3z" fill="#f7a521" stroke="#a05a10" stroke-width=".6"/></svg></span>
    <span class="on"><svg viewBox="0 0 16 16"><path d="M1 7.500h9M5.500 3v9" stroke="#111" stroke-width="1.500"/><path d="M8.500 8.500h6v4h-6z" fill="#fff" stroke="#111"/></svg></span>
    <span><svg viewBox="0 0 16 16"><path d="M1 8h13" stroke="#111"/><path d="M8 2v12M8 8h6" stroke="#111" stroke-width="2"/></svg></span>
    <span class="on"><svg viewBox="0 0 16 16"><path d="M.5.500h15v15H.5z" fill="#84bdea" stroke="#2462a8" stroke-width="1.500"/><path d="M2 3h12M2 7h12M2 11h12" stroke="#e1f1fc" stroke-width="2" stroke-dasharray="2 2"/><path d="M4 5h10M4 9h10M4 13h10" stroke="#e1f1fc" stroke-width="2" stroke-dasharray="2 2"/></svg></span>
    <span><svg viewBox="0 0 16 16"><path d="M4.500 3.500h7v10h-7z" fill="#fff" stroke="#111" stroke-width="1.500"/><path d="M6 6.500h4M6 9h4M6 11.500h4" stroke="#111" stroke-width="1.200"/></svg></span>
    <span class="on"><svg viewBox="0 0 16 16"><path d="M0 4.500h8M4.500 0v8" stroke="#333"/><path d="M5.500 5.500h6v6h-6z" fill="#dfe" stroke="#333"/><path d="M8.500 8.500h7v7h-7z" fill="#8fce73" stroke="#2b5f2a"/></svg></span>
  </div>
  <div class="right">
    <span class="model">MODEL</span>
    <span class="b"><svg viewBox="0 0 16 16"><path d="M2.500 1.500h11v11h-11z" fill="#f4f4f4" stroke="#333"/><path d="M5 5v5h4z" fill="none" stroke="#333"/><path d="M0 14.500h16" stroke="#333" stroke-width="2"/></svg></span>
    <span class="b"><svg viewBox="0 0 16 16"><path d="M.5 1.500h7v8h-7zM8.500 1.500h7v8h-7z" fill="#f4f4f4" stroke="#333"/><path d="M0 13h16" stroke="#333" stroke-width="2"/></svg></span>
    <i class="gap"></i>
    <span class="b scale"><svg viewBox="0 0 16 16"><use href="#compass"/></svg>1:1<i class="tri black"></i></span>
    <span class="b"><svg viewBox="0 0 16 16"><use href="#compass"/><circle cx="12.500" cy="8.500" r="3" fill="#ffe08a" stroke="#e07a20"/><path d="M12.500 12v3" stroke="#c60" stroke-width="2"/></svg></span>
    <span class="b dim"><svg viewBox="0 0 16 16"><use href="#compass"/></svg></span>
    <i class="gap n"></i>
    <span class="b"><svg viewBox="0 0 18 18"><use href="#gear"/><path d="M18 13v5h-5z"/></svg></span>
    <span class="b"><svg viewBox="0 0 16 16"><path d="M.5 6.500h9v8h-9z" fill="#eee" stroke="#333"/><path d="M8.500 6V3c0-3 6-3 6 0v3" fill="none" stroke="#333" stroke-width="1.500"/><path d="M5 9v3" stroke="#222" stroke-width="2"/></svg></span>
    <span class="b"><svg viewBox="0 0 16 16"><path d="M.5 3.500h12v6H.5z" fill="#8292a5" stroke="#333"/><path d="M2.500 1v2M5.500 1v2M8.500 1v2M11 1v2M2.500 10v2M5.500 10v2" stroke="#333"/><circle cx="12.500" cy="9.500" r="3" fill="#dff1fc" stroke="#2b7cc0"/><path d="M12.500 13v2" stroke="#555" stroke-width="2"/></svg></span>
    <span class="b lamp"><svg viewBox="0 0 16 16"><use href="#bulb" x="2" width="11" height="16"/></svg></span>
    <i class="tri black more"></i>
    <span class="b last"><svg viewBox="0 0 16 16"><path d="M1.500 1.500h13v13h-13z" fill="#fff" stroke="#333"/><path d="M2 3h12" stroke="#888" stroke-width="2"/></svg></span>
  </div>
</div>
<script src="drawing.js"></script>
</body>
</html>
```

FILE: styles.css
```css
* { box-sizing: border-box; }
body { margin: 0; width: 1366px; height: 729px; overflow: hidden; background: #fff; font: 12px/16px "Open Sans", "Noto Sans", sans-serif; color: #222; position: relative; }
.defs { position: absolute; }
svg { display: block; flex: none; overflow: visible; }
i { display: block; flex: none; }
.tri { width: 0; height: 0; border: 4px solid transparent; border-top: 5px solid #404348; border-bottom: 0; }
.tri.s { border-width: 3px; border-top-width: 3px; border-bottom: 0; }
.tri.black { border-top-color: #000; }

/* Title bar */
.titlebar { display: flex; height: 24px; padding-left: 41px; }
.quick { display: flex; align-items: center; width: 197px; padding-left: 8px; background: linear-gradient(#5a5a5a, #8f8f8f 8%, #727272); }
.qi { width: 18px; height: 18px; margin-right: 6px; }
.quick .qt { border-width: 3px; border-bottom: 0; border-top-width: 4px; margin: 0 8px 0 -3px; border-top-color: #4a4a4a; }
.quick .redo { margin-right: 8px; }
.workspace { display: flex; align-items: center; width: 179px; height: 22px; margin-top: 1px; padding: 0 2px 0 3px; background: linear-gradient(#b8b8b8, #e6e6e6); color: #000; border-bottom: 1px solid #777; }
.workspace span { flex: 1; padding-left: 1px; font-size: 12px; letter-spacing: -.13px; white-space: nowrap; }
.customize { width: 17px; background: linear-gradient(#555, #999 10%, #6a6a6a); padding: 8px 0 0 4px; }
.customize .bar { width: 8px; height: 1px; background: #000; margin-bottom: 2px; }
.infocenter { display: flex; align-items: center; width: 413px; margin-left: 356px; background: linear-gradient(#5a5a5a, #8b8b8b 8%, #676767); }
.play { width: 14px; height: 24px; padding: 8px 0 0 5px; background: linear-gradient(#999, #555); }
.search { width: 179px; height: 22px; padding: 4px 2px; background: #f6f6f6; border: 1px solid #ddd; color: #777; font-style: italic; font-size: 11px; letter-spacing: -.1px; white-space: nowrap; }
.binoc { margin-left: 4px; }
.user { margin-left: 7px; }
.signin { width: 89px; height: 17px; margin-left: 3px; padding-left: 1px; border-left: 1px solid #fff; color: #fff; letter-spacing: -.3px; line-height: 17px; }
.st { border-width: 3px; border-top: 4px solid #444; border-bottom: 0; }
.exch { margin-left: 8px; }
.vsep { width: 1px; height: 18px; margin: 0 9px; background: #999; }
.help { width: 16px; height: 16px; border-radius: 8px; background: #fff; color: #2a55b8; font: bold 13px/16px "Open Sans", sans-serif; text-align: center; box-shadow: 0 0 0 1px #333; margin-right: 6px; }
.wctl { margin: 5px 0 0 42px; }

/* Ribbon tabs */
.tabs { display: flex; align-items: flex-end; height: 20px; padding-left: 46px; background: #404040; }
.tab { height: 18px; line-height: 18px; color: #f2f2f2; font-size: 12px; letter-spacing: -.35px; margin-right: 19.600px; white-space: nowrap; }
.tab.wide { margin-right: 22px; }
.tab.on { width: 51px; text-align: center; margin-right: 11px; color: #333; background: linear-gradient(#dcdcdc, #fff); border-radius: 2px 2px 0 0; }
.tab:nth-child(9) { margin-right: 21px; }
.mini { margin: 0 0 5px 10px; }
.appbtn { position: absolute; left: 0; top: 0; width: 41px; height: 41px; display: flex; align-items: center; gap: 0; padding-left: 3px; border: 1px solid #2c2c2c; background: linear-gradient(160deg, #8e8e8e, #b9b9b9 45%, #767676); }
.appbtn .tri { margin-left: -4px; border-width: 3px; border-top-width: 4px; border-bottom: 0; }

/* Ribbon panels */
.ribbon { display: flex; height: 99px; padding-left: 1px; border-left: 1px solid #666; border-right: 2px solid #eee; background: linear-gradient(#c6c6c6, #858585); }
.panel { display: flex; flex-direction: column; background: #fff; border-right: 1px solid #9a9a9a; border-bottom: 1px solid #fff; }
.draw { width: 224px; }
.modify { width: 250px; }
.layer { width: 214px; }
.anno { width: 126px; }
.block { width: 108px; }
.props { width: 162px; }
.groups { width: 69px; }
.utils { width: 97px; }
.clip { width: 79px; border-right: 0; }
.body { display: flex; height: 80px; padding: 6px 0 0 1px; }
.body.col { flex-direction: column; }
footer { display: flex; align-items: center; justify-content: center; height: 17px; margin: 0 1px; background: #efefef; border-top: 1px solid #d2d2d2; font-size: 12px; letter-spacing: -.25px; color: #333; position: relative; }
footer .tri { margin-left: 6px; }
footer.off { padding-right: 10px; }
.launch { position: absolute; right: 4px; top: 6px; }
.big { display: flex; flex-direction: column; align-items: center; flex: none; }
.big > svg { width: 34px; height: 34px; }
.big b { font-weight: normal; letter-spacing: -.2px; margin-top: 3px; }
.big .tri { margin-top: 1px; }
.glyph { font: 600 40px/34px "Open Sans", sans-serif; height: 34px; color: #44484e; }
.w34 { width: 34px; } .w40 { width: 40px; } .w42 { width: 42px; } .w44 { width: 44px; } .w52 { width: 52px; } .w58 { width: 58px; } .w70 { width: 70px; }
.stack { display: flex; flex-direction: column; flex: none; }
.stack > * { height: 22px; margin-bottom: 2px; }
.c72 { width: 72px; } .c69 { width: 69px; }
.cmd { display: flex; align-items: center; letter-spacing: -.3px; white-space: nowrap; }
.cmd svg { width: 16px; height: 16px; margin-right: 5px; }
.arrows .tri { margin-left: auto; margin-right: 10px; }
.sb, .sa { display: flex; align-items: center; justify-content: center; width: 24px; height: 22px; border: 1px solid #ccc; background: linear-gradient(#fff, #ececec); }
.sb svg { width: 16px; height: 16px; }
.sb.on { background: #a9d2f3; border-color: #2f6db5; }
.sa { width: 13px; margin-left: -1px; }
.split { display: flex; }
.splits { margin-left: 4px; }
.draw .body { padding-left: 0; }
.draw .w44 { width: 43px; }
.modify .body { padding-left: 7px; }
.modify .btns { margin-left: -1px; }
.groups .body { padding-left: 0; }
.layer .body { padding-left: 2px; }
.lrow { display: flex; gap: 4px; height: 22px; margin-bottom: 2px; }
.pair { display: flex; }
.pair .sb + .sb { margin-left: -1px; width: 25px; }
.combo { display: flex; align-items: center; height: 22px; border: 1px solid #ccc; background: linear-gradient(#fff, #efefef); padding: 0 2px; letter-spacing: -.3px; white-space: nowrap; }
.combo .tri { margin-left: auto; }
.layer .combo { width: 209px; margin-bottom: 2px; }
.layer .icons { gap: 3px; padding-left: 5px; }
.icons .swatch { margin-left: 2px; margin-right: 3px; }
.icons svg + svg { margin-left: 2px; }
.icons svg + svg + svg { margin-left: 0; }
.swatch { width: 14px; height: 14px; background: #fff; border: 1px solid #111; }
.anno .c72 { margin-left: 5px; }
.anno .arrows .tri { margin-right: 5px; }
.block .w42 { width: 41px; }
.block .stack { margin-left: 3px; }
.block .split { margin-left: -3px; }
.block .cmd svg { margin-right: 4px; }
.pic { width: 19px; padding-left: 0; margin-left: 2px; }
.pic svg { width: 16px; height: 16px; margin: 3px 0 5px; }
.props .combo { width: 138px; }
.props .combo .tri { margin-right: 2px; }
.props .swatch { width: 16px; height: 16px; margin-right: 2px; }
.rule { width: 64px; height: 1px; background: #000; margin: 0 3px 0 1px; }
.cont { padding-left: 4px; }
.gutter { height: 7px; background: linear-gradient(#666 0 4px, #8f8f8f 4px 5px, #444 5px 6px, #777 6px); }

/* Model space */
.canvas { height: 467px; border-left: 2px solid #8e8e8e; border-right: 2px solid #eee; background: #212830; }
#drawing { overflow: hidden; }
.vp { font: 11.500px "Open Sans", sans-serif; letter-spacing: .05px; fill: #fff; }
.ucs { font: 300 18px "Open Sans", Lato, sans-serif; fill: #fff; }
.dir { font: bold 14px "Liberation Sans", sans-serif; fill: #b5b7ba; text-anchor: middle; }
.top { font: bold 9.500px "Liberation Sans", sans-serif; fill: #50555f; text-anchor: middle; }
.wcs { font: 11px "Liberation Sans", sans-serif; fill: #4d515b; }
.pipe { stroke: #0000a8; fill: none; }
.lab { fill: #fff; }
.tag { fill: #0f0; }
.node { fill: none; stroke: #0f0; }
.lead { stroke: #ff0; }

/* Layout tabs */
.layouts { display: flex; height: 17px; padding-left: 2px; background: #f0f0f0; border-top: 1px solid #999; border-bottom: 1px solid #ccc; font: 12px/16px "Liberation Sans", sans-serif; }
.lnav { display: flex; width: 60px; }
.lnav svg { width: 15px; height: 15px; border-right: 1px solid #aaa; }
.ltab { width: 55px; padding-left: 5px; color: #000; letter-spacing: -.4px; }
.ltab.on { width: 53px; padding-left: 12px; color: #fff; background: #212830; clip-path: polygon(0 0, 100% 0, 46px 100%, 5px 100%); letter-spacing: -.6px; }
.layouts > svg { margin-left: -7px; }

/* Command line */
.command { display: flex; height: 72px; border-top: 4px solid #666; }
.grip { width: 16px; padding: 3px 0 0 2px; background: #a0a0a0; border-right: 1px solid #ddd; }
.grip i { width: 11px; height: 4px; background: repeating-linear-gradient(90deg, transparent 0 1px, #a0a0a0 1px 2px), linear-gradient(#333 1px, transparent 1px 3px, #333 3px); }
.cmdtext { flex: 1; font: 11.630px/15px "DejaVu Sans Mono", monospace; color: #000; white-space: nowrap; }
.history { height: 51px; padding: 2px 0 0 1px; background: #c8c8c8; border-bottom: 1px solid #999; }
.prompt { padding: 3px 0 0 1px; }

/* Status bar */
.status { display: flex; height: 23px; background: linear-gradient(#666, #999 15%, #777); border-top: 1px solid #111; border-bottom: 1px solid #222; font: 12px/21px "Liberation Sans", sans-serif; color: #000; }
.coords { width: 241px; padding-left: 12px; letter-spacing: -.33px; font-size: 11.500px; line-height: 23px; }
.toggles { display: flex; border-left: 1px solid #444; }
.toggles span { display: flex; align-items: center; justify-content: center; width: 22px; background: linear-gradient(#c4c4c4, #a0a0a0); border-right: 1px solid #555; }
.toggles svg, .right svg { width: 16px; height: 16px; }
.toggles .on { background: linear-gradient(#d3eef6, #8fc5d8); }
.right { display: flex; align-items: center; margin-left: auto; height: 21px; }
.right > span { display: flex; align-items: center; justify-content: center; width: 22px; height: 21px; background: linear-gradient(#bdbdbd, #a0a0a0); border-right: 1px solid #555; }
.right > .model { width: 45px; border-left: 1px solid #555; letter-spacing: -.3px; font-size: 11.500px; }
.right > .scale { width: 52px; gap: 3px; letter-spacing: -.2px; }
.gap { width: 12px; }
.gap.n { width: 6px; }
.dim svg { opacity: .4; }
.right > .lamp { width: 32px; background: #8a8a8a; border: 1px solid #444; }
.right .more { margin: 4px 2px 0 3px; border-width: 3px; border-top-width: 5px; border-bottom: 0; }
.right > .last { width: 23px; }
```

FILE: drawing.js
```js
// Sewer network: manholes, the pipes between them, and their labels.
// node: [x, y, tagX, tagY, [labelX, labelY], ...]
const nodes = {
  n1: [379, 206, 381, 204, [362, 209]], n2: [384, 232, 385, 230, [367, 236]],
  n3: [396, 259, 398, 257, [381, 264]], n4: [419, 284, 421, 281, [406, 290]],
  n5: [485, 326, 487, 323, [472, 332]], n6: [555, 370, 557, 368, [543, 376]],
  n7: [575, 375, 577, 372, [574, 377], [574, 374]], n8: [582, 381, 585, 379],
  n9: [570, 388, 571, 385, [573, 392]],
  a1: [688, 201, 690, 198], a2: [694, 216, 695, 212, [686, 211]], a3: [683, 221, 685, 218, [684, 227]],
  a4: [675, 236, 677, 233, [675, 238], [674, 241]], a5: [682, 244, 684, 241],
  a6: [650, 280, 652, 277, [655, 285]], a7: [601, 320, 603, 318, [602, 324], [604, 327]],
  a8: [607, 331, 608, 328], a9: [684, 328, 686, 325, [671, 322]],
  a10: [740, 325, 742, 322, [726, 319], [739, 331]], a11: [737, 252, 739, 249, [730, 249]],
  a12: [730, 201, 732, 198, [714, 196]], a13: [734, 205, 736, 202, [726, 203]],
  b1: [787, 178, 788, 175, [771, 173]], b2: [791, 183, 793, 180, [783, 181]],
  b3: [832, 171, 833, 168, [818, 165]], b4: [840, 177, 841, 174, [830, 172]],
  b5: [842, 214, 843, 212, [837, 212]], b6: [945, 208, 947, 206, [931, 203]],
  b7: [992, 205, 994, 202, [978, 199]], b8: [794, 249, 796, 246, [788, 247]],
  b9: [797, 322, 799, 320, [791, 320]], b10: [846, 315, 848, 312, [840, 313]],
  c1: [687, 426, 689, 423, [677, 421]], c2: [722, 431, 724, 429, [709, 425], [721, 437]],
  c3: [764, 429, 766, 426, [765, 434]], c4: [802, 416, 804, 413, [795, 413], [801, 422]],
  c5: [853, 411, 854, 408, [847, 409]], c6: [855, 462, 856, 459, [849, 460]],
  c7: [821, 464, 823, 462, [820, 470]], c8: [604, 443, 605, 440, [596, 438]],
  c9: [674, 487, 676, 484, [664, 481]], c10: [738, 492, 740, 489, [725, 486]],
  c11: [762, 492, 765, 490, [745, 490], [745, 493]], c12: [756, 499, 757, 496],
  c13: [768, 514, 770, 512, [760, 510], [771, 520]], c14: [772, 531, 774, 528, [766, 528]],
  c15: [760, 599, 762, 597, [765, 602]]
};
const runs = ["n1 n2 n3 n4 n5 n6 n7 a7 a6 a4 a3 a2 a12 b1 b3 b4 b5 b10 c5 c6 c7 c13",
  "n7 n9 c8 c9 c10 c12 c13 c14 c15", "n8 c1 c2 c3 c4 c5", "a1 a2", "a5 a9 c1",
  "a8 a9 a10 b9", "a13 a11 a10", "b2 b8 b9 c4", "b5 b6 b7", "c3 c11"];
let pipes = "", labels = "", marks = "", greens = "";
for (const run of runs) {
  const ids = run.split(" ");
  for (let k = 1; k < ids.length; k++) {
    let p = nodes[ids[k - 1]], q = nodes[ids[k]];
    pipes += `<path class="pipe" d="M${p[0]}.5 ${p[1]}.5L${q[0]}.5 ${q[1]}.5"/>`;
    if (p[0] > q[0]) [p, q] = [q, p];
    const len = Math.hypot(q[0] - p[0], q[1] - p[1]);
    if (len < 13) continue;
    const ang = Math.atan2(q[1] - p[1], q[0] - p[0]) * 180 / Math.PI;
    labels += `<g transform="translate(${(p[0] + q[0]) / 2 + .5} ${(p[1] + q[1]) / 2 + .5}) rotate(${ang.toFixed(1)})">` +
      `<path class="lab" d="M-8.500 .7h5v-.3h12v2h-8v.7h-9zM-2-2.200h1.500v1h1.500v-1h2v2.200h-5z"/></g>`;
  }
}
for (const [x, y, tx, ty, ...labs] of Object.values(nodes)) {
  for (const [lx, ly] of labs) {
    const left = lx + 6 < x;
    const end = left ? lx + 12 : lx;
    marks += `<path class="lab" d="${left ? `M${lx} ${ly - 1}h5v-1h7v4h-6v-1h-6z` : `M${lx} ${ly - 1}h1v-1h6v1h5v2h-5v1h-7z`}"/>` +
      `<path class="lead" d="M${x}.5 ${y + 1}L${end} ${ly}.5"/>`;
  }
  greens += tx === 690 ? `<path class="tag" d="M${tx} ${ty - 1}h3v2h-3z"/>`
    : `<path class="tag" d="M${tx} ${ty - 1}h5v1h1v-1h1v1h1v-1h2v3h-4v-1h-1v1h-5z"/>`;
  greens += `<path class="node" d="M${x - 1}.5 ${y - 1}.5h3v3h-3z"/>`;
}
document.getElementById("network").innerHTML = pipes + labels + marks + greens;
```
